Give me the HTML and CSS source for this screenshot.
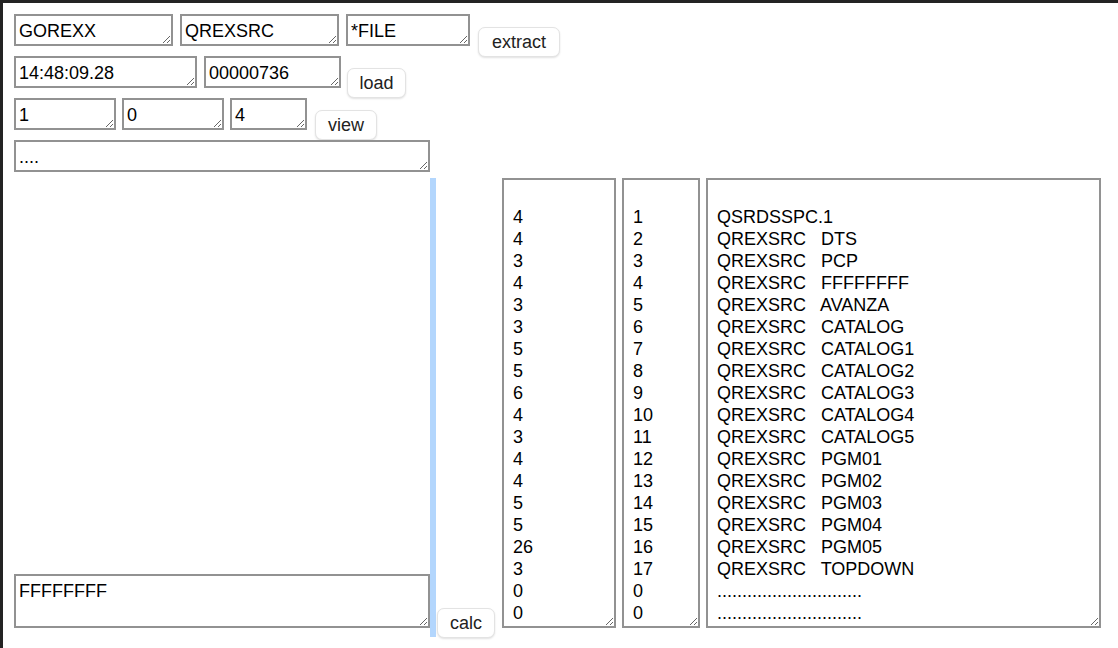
FILE: index.html
```html
<!DOCTYPE html>
<html>
<head>
<meta charset="utf-8">
<link rel="stylesheet" href="styles.css">
</head>
<body>
<div class="page">
  <div class="row">
    <textarea class="ta w159">GOREXX</textarea>
    <textarea class="ta w159">QREXSRC</textarea>
    <textarea class="ta w124">*FILE</textarea>
    <button class="btn b-extract">extract</button>
  </div>
  <div class="row">
    <textarea class="ta w183">14:48:09.28</textarea>
    <textarea class="ta w137">00000736</textarea>
    <button class="btn b-load">load</button>
  </div>
  <div class="row row3">
    <textarea class="ta w102">1</textarea>
    <textarea class="ta w102">0</textarea>
    <textarea class="ta w77">4</textarea>
    <button class="btn b-view">view</button>
  </div>
  <div class="row4">
    <textarea class="ta w416">....</textarea>
  </div>
  <div class="main">
    <div class="leftcol">
      <textarea class="ta big-left">FFFFFFFF</textarea>
    </div>
    <div class="bluebar"></div>
    <button class="btn b-calc">calc</button>
    <textarea class="ta col c1">

4
4
3
4
3
3
5
5
6
4
3
4
4
5
5
26
3
0
0</textarea>
    <textarea class="ta col c2">

1
2
3
4
5
6
7
8
9
10
11
12
13
14
15
16
17
0
0</textarea>
    <textarea class="ta col c3">

QSRDSSPC.1
QREXSRC   DTS
QREXSRC   PCP
QREXSRC   FFFFFFFF
QREXSRC   AVANZA
QREXSRC   CATALOG
QREXSRC   CATALOG1
QREXSRC   CATALOG2
QREXSRC   CATALOG3
QREXSRC   CATALOG4
QREXSRC   CATALOG5
QREXSRC   PGM01
QREXSRC   PGM02
QREXSRC   PGM03
QREXSRC   PGM04
QREXSRC   PGM05
QREXSRC   TOPDOWN
.............................
.............................</textarea>
  </div>
</div>
</body>
</html>
```
FILE: styles.css
```css
html, body {
  margin: 0;
  padding: 0;
  background: #ffffff;
}
.page {
  box-sizing: border-box;
  width: 1118px;
  height: 648px;
  border-top: 3px solid #232323;
  border-left: 3px solid #232323;
  padding: 11px 0 0 11px;
  font-family: "Liberation Sans", Arial, sans-serif;
  overflow: hidden;
}
.row {
  display: flex;
  align-items: flex-start;
  gap: 7px;
  height: 42px;
}
.row3 {
  gap: 6px;
}
.row4 {
  display: flex;
  height: 38px;
}
.ta {
  box-sizing: border-box;
  height: 32px;
  margin: 0;
  border: 2px solid #929292;
  border-radius: 0;
  padding: 4px 3px 0 3px;
  font-family: "Liberation Sans", Arial, sans-serif;
  font-size: 18px;
  line-height: 22px;
  color: #000;
  background: #fff;
  overflow: hidden;
  white-space: pre;
  outline: none;
  flex: none;
}
.w159 { width: 159px; }
.w124 { width: 124px; }
.w183 { width: 183px; }
.w137 { width: 137px; }
.w102 { width: 102px; }
.w77 { width: 77px; }
.w416 { width: 416px; }
.btn {
  box-sizing: border-box;
  height: 30px;
  margin: 13px 0 0 1px;
  padding: 0;
  border: 1px solid #e3e3e3;
  border-radius: 7px;
  background: #ffffff;
  box-shadow: 0 1px 2px rgba(0, 0, 0, 0.12);
  font-family: "Liberation Sans", Arial, sans-serif;
  font-size: 18px;
  color: #222;
  flex: none;
}
.b-extract { width: 82px; }
.b-load { width: 59px; margin-top: 12px; margin-left: -1px; }
.b-view { width: 62px; margin-left: 2px; margin-top: 12px; }
.main {
  display: flex;
  align-items: flex-start;
}
.leftcol {
  width: 416px;
  height: 450px;
  display: flex;
  flex-direction: column;
  justify-content: flex-end;
  flex: none;
}
.big-left {
  width: 416px;
  height: 54px;
}
.bluebar {
  width: 6px;
  height: 459px;
  background: #b3d6fd;
  flex: none;
}
.b-calc {
  width: 58px;
  margin: 430px 0 0 1px;
}
.col {
  height: 450px;
  padding: 4px 8px 2px 9px;
}
.c1 { width: 114px; margin-left: 7px; }
.c2 { width: 78px; margin-left: 6px; }
.c3 { width: 395px; margin-left: 6px; }
```
